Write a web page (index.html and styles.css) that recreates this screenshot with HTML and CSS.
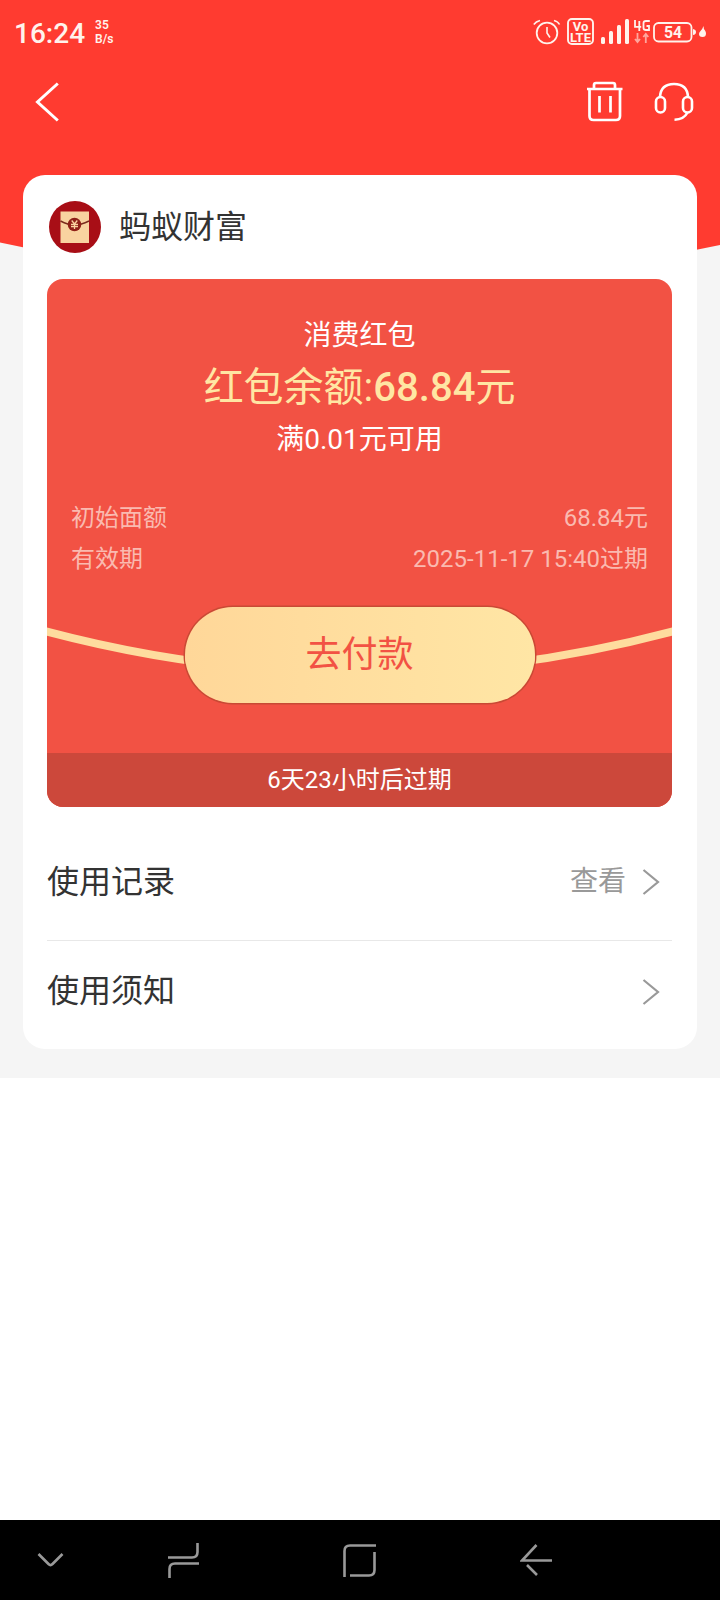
FILE: index.html
```html
<!DOCTYPE html>
<html lang="zh-CN">
<head>
<meta charset="utf-8">
<title>消费红包</title>
<link rel="stylesheet" href="styles.css">
</head>
<body>
<div class="screen">
  <main class="page">
    <svg class="backdrop" width="720" height="300" viewBox="0 0 720 300"><path d="M0 0H720V245Q360 321 0 242.500Z" fill="#ff3b30"/></svg>
    <header class="status">
      <span class="clock">16:24</span>
      <span class="speed"><span>35</span><span>B/s</span></span>
      <svg class="status-icons" width="180" height="32" viewBox="530 16 180 32" fill="none" stroke="#fff3ec">
        <circle cx="547" cy="33" r="10.3" stroke-width="1.8"/>
        <path d="M547 27V33L550 37.500M533.800 24.500Q536 21.500 540 20.500M554 20.500Q558 21.500 559.500 24.500" stroke-width="1.6"/>
        <rect x="568" y="19" width="25" height="25" rx="4" stroke-width="1.900"/>
        <g fill="#fff3ec" stroke="none">
          <text class="micro" text-anchor="middle" font-size="13"><tspan x="580.500" y="30.500">Vo</tspan><tspan x="580.500" y="42">LTE</tspan></text>
          <rect x="601" y="37" width="4" height="7" rx="1.500"/>
          <rect x="609" y="31" width="4" height="13" rx="1.500"/>
          <rect x="617" y="25" width="4" height="19" rx="1.500"/>
          <rect x="625" y="19" width="4" height="25" rx="1.500"/>
          <text class="micro" x="673" y="38" text-anchor="middle" font-size="15.800">54</text>
          <path d="M693 29Q696 29.500 696 32T693 35ZM703.500 26Q703.500 29 705 30.500Q706 32 706 33.500Q706 37 702.500 37Q699 37 699 34Q699 32.500 700.500 31Q702.500 29 703.500 26Z"/>
        </g>
        <path d="M635 20V26.800H641.200M639.300 21V31M649.800 21H646Q643.500 21 643.500 23V28Q643.500 30 646 30H649V26H646.500" stroke-width="1.800"/>
        <path d="M637.500 33V42M635 39L637.500 42L640 39M645.800 43V34M643.300 37L645.800 34L648.300 37" stroke="#ffa69d" stroke-width="1.800"/>
        <rect x="654" y="23" width="37.500" height="18.500" rx="4.500" stroke-width="1.800"/>
      </svg>
    </header>
    <nav class="toolbar">
      <svg width="24" height="40" viewBox="0 0 24 40" fill="none" stroke="#fff" stroke-width="3"><path d="M22.800 1.500L2.500 20L22.800 38.500" /></svg>
      <span class="tools">
        <svg width="36" height="42" viewBox="587 81 36 42" fill="none" stroke="#fff" stroke-width="2.700">
          <path d="M587 89H622.500M594 88V85Q594 83 596 83H613Q615 83 615 85V88M589.500 89V116Q589.500 120 593.500 120H616Q620 120 620 116V89M599.500 96V112.500M610.500 96V112.500"/>
        </svg>
        <svg width="40" height="42" viewBox="654 81 40 42" fill="none" stroke="#fff" stroke-width="2.600">
          <rect x="656" y="97" width="9" height="15.500" rx="4.500"/>
          <rect x="683" y="97" width="9" height="15.500" rx="4.500"/>
          <path d="M660 97C660.500 88 666 84 674 84S687.500 88 688 97M687.500 112.500Q684 119.500 674.500 119.700"/>
        </svg>
      </span>
    </nav>
    <section class="card">
      <div class="merchant">
        <svg width="52" height="52" viewBox="0 0 52 52">
          <circle cx="26" cy="26" r="26" fill="#a80e16"/>
          <rect x="11.500" y="10.500" width="28.500" height="31.500" fill="#f9d3a0"/>
          <path d="M11.500 20Q19 24 25.500 24T40 20" fill="none" stroke="#7a2a1c" stroke-width="1.500"/>
          <circle cx="25.500" cy="23.500" r="6.800" fill="#8f2018"/>
          <path d="M22.700 19.500L25.500 23L28.300 19.500M25.500 23V28M22 23.300H29M22 25.500H29" fill="none" stroke="#f9d3a0" stroke-width="1.300"/>
        </svg>
        <span class="label">蚂蚁财富</span>
      </div>
      <div class="coupon">
        <div class="kind">消费红包</div>
        <div class="amount">红包余额:<b>68.84</b>元</div>
        <div class="rule">满0.01元可用</div>
        <div class="info first"><span>初始面额</span><span>68.84元</span></div>
        <div class="info"><span>有效期</span><span>2025-11-17 15:40过期</span></div>
        <svg class="ribbon" width="625" height="60" viewBox="47 620 625 60" fill="none"><path d="M40 629.800Q359.500 716 679 629.800" stroke="#fedc9e" stroke-width="8"/></svg>
        <a class="pay">去付款</a>
        <div class="expiry">6天23小时后过期</div>
      </div>
      <div class="row"><span class="label">使用记录</span><span class="more"><span class="label">查看</span><svg width="18" height="26" viewBox="0 0 18 26" fill="none" stroke="#999" stroke-width="2.200"><path d="M1.500 1L16 13L1.500 25"/></svg></span></div>
      <div class="row last"><span class="label">使用须知</span><span class="more"><svg width="18" height="26" viewBox="0 0 18 26" fill="none" stroke="#999" stroke-width="2.200"><path d="M1.500 1L16 13L1.500 25"/></svg></span></div>
    </section>
  </main>
  <footer class="keys">
    <svg width="28" height="40" viewBox="36 1540 28 40"><path d="M38.500 1554L48.500 1564Q50.500 1566 52.500 1564L62.500 1554"/></svg>
    <svg class="recent" width="32" height="40" viewBox="168 1540 32 40"><path d="M168 1557.500H192Q197.500 1557.500 197.500 1552V1543M199 1563.500H175Q169.500 1563.500 169.500 1569V1578"/></svg>
    <svg width="34" height="40" viewBox="343 1540 34 40"><path d="M344.500 1577V1551Q344.500 1545.500 350 1545.500H376M350 1575.500H369Q374.500 1575.500 374.500 1570V1552"/></svg>
    <svg width="32" height="40" viewBox="520 1540 32 40"><path d="M552 1560.500H522L536.500 1545M527 1565L537 1575"/></svg>
  </footer>
</div>
</body>
</html>
```
FILE: styles.css
```css
body {
  margin: 0;
  background: #fff;
  font-family: Roboto, "Noto Sans CJK SC", sans-serif;
}

svg { display: block; flex: none; }

.screen {
  width: 720px;
  height: 1600px;
  display: flex;
  flex-direction: column;
  justify-content: space-between;
}

.page {
  position: relative;
  height: 1078px;
  background: #f5f5f5;
}

.backdrop { position: absolute; left: 0; top: 0; }

.status {
  position: relative;
  height: 64px;
  box-sizing: border-box;
  padding: 16px 10px 0 14px;
  display: flex;
  color: #fff3ec;
}

.clock {
  font-size: 28px;
  line-height: 36px;
  font-weight: 500;
}

.speed {
  display: flex;
  flex-direction: column;
  margin: 2px 0 0 10px;
  font-size: 12px;
  line-height: 14px;
  font-weight: 600;
}

.status-icons { margin-left: auto; }

.micro { font-family: Roboto, sans-serif; font-weight: bold; }

.toolbar {
  position: relative;
  height: 75px;
  padding: 0 26px 0 35px;
  display: flex;
  align-items: center;
  justify-content: space-between;
}

.tools { display: flex; gap: 31px; }

.card {
  position: relative;
  height: 874px;
  margin: 36px 23px 0;
  box-sizing: border-box;
  padding: 0 25px 0 24px;
  border-radius: 22px;
  background: #fff;
  color: #333;
}

.merchant {
  height: 104px;
  padding-left: 2px;
  display: flex;
  align-items: center;
  gap: 18px;
  font-size: 32px;
}

.label { line-height: 48px; padding-bottom: 1px; }

.coupon {
  position: relative;
  height: 528px;
  border-radius: 16px;
  overflow: hidden;
  background: #f25244;
  color: #fff;
  display: flex;
  flex-direction: column;
  align-items: center;
}

.kind { margin-top: 36px; font-size: 28px; line-height: 42px; }
.amount { margin-top: 3px; font-size: 40px; line-height: 56px; color: #ffe6a3; }
.amount b { font-weight: 500; }
.rule { margin-top: 3px; font-size: 28px; line-height: 42px; }

.info {
  align-self: stretch;
  padding: 0 24px;
  display: flex;
  justify-content: space-between;
  font-size: 24px;
  line-height: 41px;
  color: #fabab0;
}

.first { margin-top: 37px; }

.ribbon { position: absolute; left: 0; top: 341px; }

.pay {
  position: relative;
  width: 350px;
  height: 96px;
  margin-top: 27px;
  border-radius: 48px;
  background: linear-gradient(90deg, #ffd799, #ffe6a5);
  box-shadow: 0 0 0 1.5px #c84a35;
  font-size: 36px;
  line-height: 96px;
  text-align: center;
  color: #f25244;
}

.expiry {
  align-self: stretch;
  margin-top: auto;
  font-size: 24px;
  line-height: 54px;
  text-align: center;
  background: #cc483b;
}

.row {
  height: 110px;
  padding-right: 12px;
  display: flex;
  align-items: center;
  justify-content: space-between;
  font-size: 32px;
}

.row:not(.last) {
  height: 118px;
  padding-top: 16px;
  background: linear-gradient(#e8e8e8, #e8e8e8) bottom / 100% 1px no-repeat;
}

.row.last { height: 101px; }

.more {
  display: flex;
  align-items: center;
  gap: 16px;
  font-size: 28px;
  color: #999;
}

.keys {
  height: 80px;
  padding: 0 168px 0 36px;
  display: flex;
  align-items: center;
  gap: 143px;
  background: #000;
}

.keys .recent { margin-left: -39px; }
.keys path { fill: none; stroke: #999; stroke-width: 2.6; }
```
